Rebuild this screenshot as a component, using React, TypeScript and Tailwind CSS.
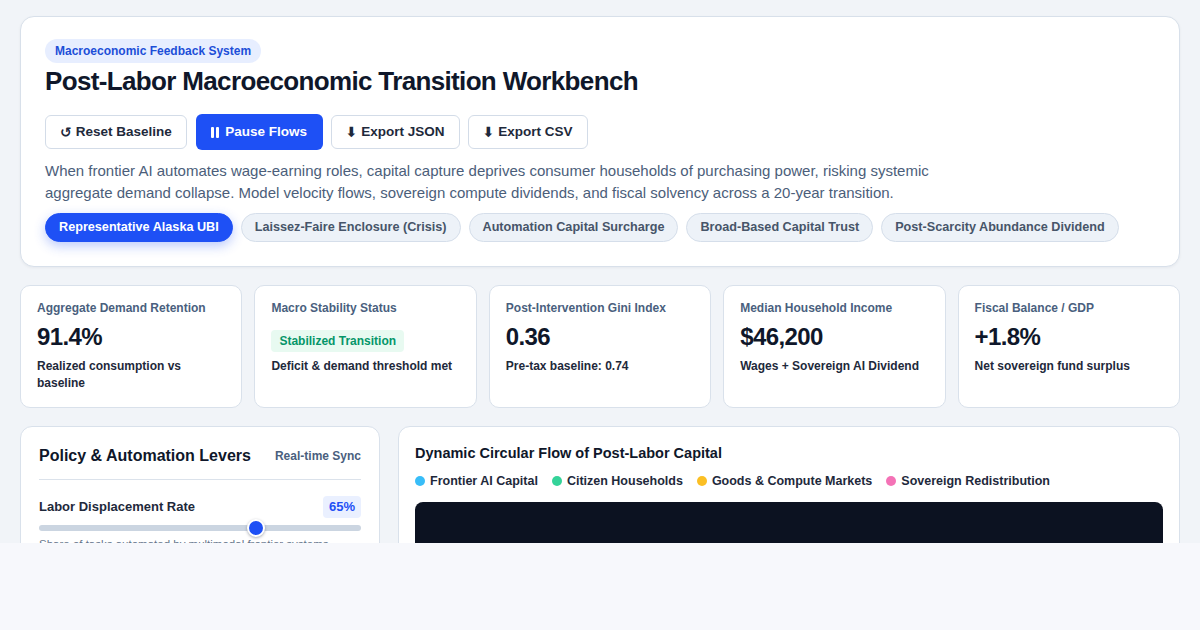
import React from "react";

const scenarios = [
  "Representative Alaska UBI",
  "Laissez-Faire Enclosure (Crisis)",
  "Automation Capital Surcharge",
  "Broad-Based Capital Trust",
  "Post-Scarcity Abundance Dividend",
];

const metrics = [
  { label: "Aggregate Demand Retention", value: "91.4%", sub: "Realized consumption vs baseline" },
  { label: "Macro Stability Status", status: "Stabilized Transition", sub: "Deficit & demand threshold met" },
  { label: "Post-Intervention Gini Index", value: "0.36", sub: "Pre-tax baseline: 0.74" },
  { label: "Median Household Income", value: "$46,200", sub: "Wages + Sovereign AI Dividend" },
  { label: "Fiscal Balance / GDP", value: "+1.8%", sub: "Net sovereign fund surplus" },
];

const legend = [
  { label: "Frontier AI Capital", dot: "bg-[#38bdf8]" },
  { label: "Citizen Households", dot: "bg-[#34d399]" },
  { label: "Goods & Compute Markets", dot: "bg-[#fbbf24]" },
  { label: "Sovereign Redistribution", dot: "bg-[#f472b6]" },
];

function ToolButton({ icon, label }: { icon: string; label: string }) {
  return (
    <button className="flex h-[34px] items-center gap-1 rounded-md border border-[#d3dce8] bg-white px-[14px] text-[13.5px] font-bold text-[#1e293b]">
      <span className="font-['DejaVu_Sans',sans-serif] text-[14px] font-bold leading-none">{icon}</span>
      {label}
    </button>
  );
}

export default function App() {
  return (
    <div className="min-h-[630px] bg-[#f7f8fc] font-['Liberation_Sans',Arial,sans-serif]">
      <div className="h-[543px] overflow-hidden bg-[#f1f4f8] px-5 pt-4">
        {/* Header */}
        <section className="rounded-[14px] border border-[#d8e0ea] bg-white px-6 pb-6 pt-[21px] shadow-[0_1px_3px_rgba(15,23,42,0.05)]">
          <span className="inline-flex h-6 items-center rounded-full bg-[#e7eeff] px-2.5 text-xs font-bold text-[#1d4ed8]">
            Macroeconomic Feedback System
          </span>
          <h1 className="mt-[3px] text-[26px] font-bold leading-[31px] tracking-tight text-[#0f172a]">
            Post-Labor Macroeconomic Transition Workbench
          </h1>

          <div className="mt-[17px] flex items-center gap-2">
            <ToolButton icon="↺" label="Reset Baseline" />
            <button className="ml-px flex h-9 items-center gap-[6px] rounded-md bg-[#1e50f5] px-[15.5px] text-[13.5px] font-bold text-white">
              <span className="flex gap-[2px]">
                <span className="h-[11px] w-[3px] rounded-[1px] bg-white" />
                <span className="h-[11px] w-[3px] rounded-[1px] bg-white" />
              </span>
              Pause Flows
            </button>
            <ToolButton icon="⬇" label="Export JSON" />
            <ToolButton icon="⬇" label="Export CSV" />
          </div>

          <p className="mt-[10px] max-w-[920px] text-[15px] leading-[22px] text-[#4b5e7a]">
            When frontier AI automates wage-earning roles, capital capture deprives consumer households of purchasing
            power, risking systemic aggregate demand collapse. Model velocity flows, sovereign compute dividends, and
            fiscal solvency across a 20-year transition.
          </p>

          <div className="mt-[9px] flex flex-wrap gap-2">
            {scenarios.map((s, i) =>
              i === 0 ? (
                <button
                  key={s}
                  className="h-[29px] rounded-full border border-[#1e50f5] bg-[#1e50f5] px-[13px] text-[12.65px] font-bold text-white shadow-[0_4px_12px_rgba(30,80,245,0.3)]"
                >
                  {s}
                </button>
              ) : (
                <button
                  key={s}
                  className="h-[29px] rounded-full border border-[#d5deea] bg-[#edf2f8] px-[13px] text-[12.65px] font-bold text-[#475569]"
                >
                  {s}
                </button>
              )
            )}
          </div>
        </section>

        {/* Metrics */}
        <div className="mt-[18px] grid grid-cols-5 gap-3">
          {metrics.map((m) => (
            <div key={m.label} className="rounded-[10px] border border-[#d9e1eb] bg-white px-4 pb-[15px] pt-[14px]">
              <div className="text-xs font-bold leading-4 text-[#4a5f7e]">{m.label}</div>
              {m.status ? (
                <div className="mt-1.5 flex h-[30px] items-end">
                  <span className="inline-flex h-[22px] items-center rounded bg-[#e8faf1] px-2 text-xs font-bold text-[#059669]">
                    {m.status}
                  </span>
                </div>
              ) : (
                <div className="mt-1.5 text-2xl font-bold leading-[30px] tracking-tight text-[#0f172a]">{m.value}</div>
              )}
              <div className="mt-1.5 text-xs font-bold leading-[17px] text-[#1e293b]">{m.sub}</div>
            </div>
          ))}
        </div>

        {/* Panels */}
        <div className="mt-[18px] grid grid-cols-[360px_1fr] gap-[18px]">
          <div className="h-[200px] rounded-xl border border-[#d9e1eb] bg-white px-[18px] pt-[18px]">
            <div className="flex items-center justify-between pb-3">
              <h2 className="text-base font-bold leading-[22px] text-[#0f172a]">Policy &amp; Automation Levers</h2>
              <span className="text-xs font-bold text-[#4a5f7e]">Real-time Sync</span>
            </div>
            <div className="h-px bg-[#dbe2eb]" />
            <div className="mt-4 flex items-center justify-between">
              <span className="text-[13px] font-bold text-[#1e293b]">Labor Displacement Rate</span>
              <span className="inline-flex h-[22px] items-center rounded bg-[#eaf0ff] px-1.5 text-[13px] font-bold text-[#1e50f5]">
                65%
              </span>
            </div>
            <div className="relative mt-[7px] h-[6px] rounded-full bg-[#cbd5e1]">
              <span className="absolute left-[208px] top-[-6px] h-[18px] w-[18px] rounded-full border-2 border-white bg-[#1e50f5] shadow-[0_1px_3px_rgba(15,23,42,0.35)]" />
            </div>
            <p className="mt-[5px] text-[11.5px] leading-4 text-[#64748b]">
              Share of tasks automated by multimodal frontier systems
            </p>
          </div>

          <div className="h-[200px] rounded-xl border border-[#d9e1eb] bg-white px-4 pt-4">
            <h2 className="text-[14.5px] font-bold leading-5 text-[#0f172a]">Dynamic Circular Flow of Post-Labor Capital</h2>
            <div className="mt-[10px] flex items-center gap-[14px]">
              {legend.map((l) => (
                <div key={l.label} className="flex items-center gap-[5px] text-[12.5px] font-bold leading-4 text-[#1e293b]">
                  <span className={`h-2.5 w-2.5 rounded-full ${l.dot}`} />
                  {l.label}
                </div>
              ))}
            </div>
            <div className="mt-[13px] h-[200px] rounded-lg bg-[#0c1221]" />
          </div>
        </div>
      </div>
    </div>
  );
}
